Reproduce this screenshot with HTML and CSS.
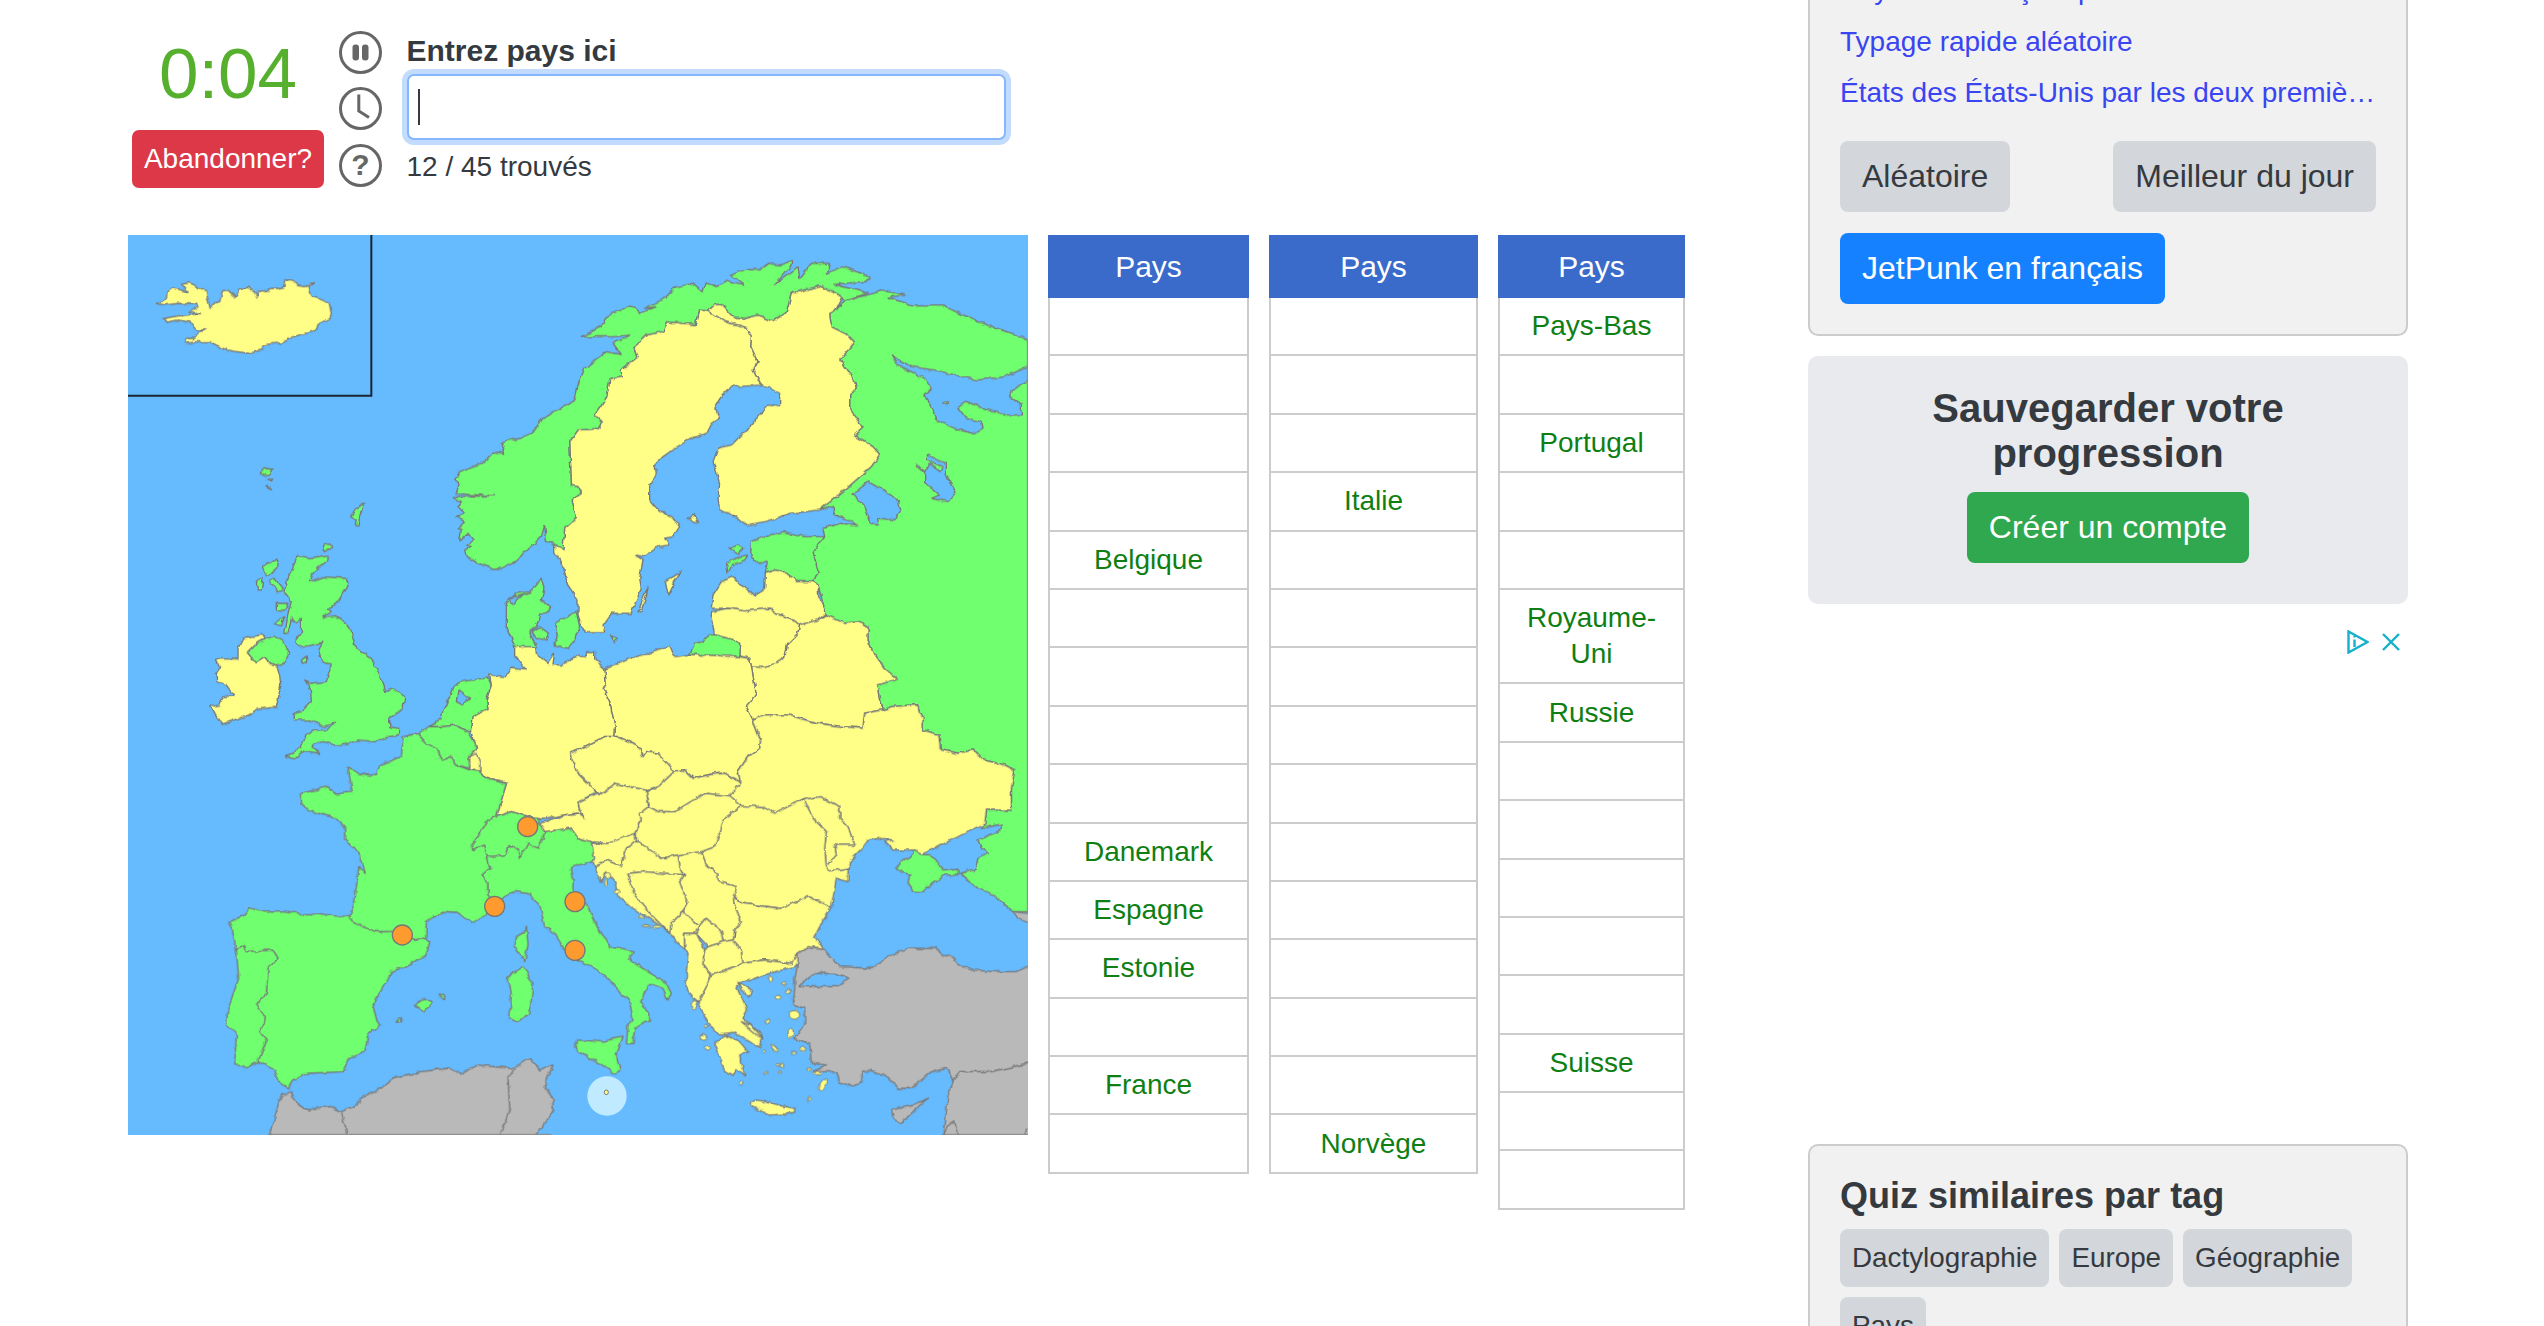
FILE: index.html
```html
<!DOCTYPE html>
<html lang="fr">
<head>
<meta charset="utf-8">
<title>Pays d'Europe</title>
<link rel="stylesheet" href="styles.css">
</head>
<body>
<div class="page">
  <main class="quiz">
    <section class="top">
      <div class="clock-col">
        <div class="timer">0:04</div>
        <button class="btn-red">Abandonner?</button>
      </div>
      <div class="ctl-col">
        <div class="ctl"><svg viewBox="0 0 43 43" class="ctl-svg"><rect x="13.5" y="13.5" width="6.5" height="16" rx="3" class="ctl-fill"/><rect x="23" y="13.5" width="6.5" height="16" rx="3" class="ctl-fill"/></svg></div>
        <div class="ctl"><svg viewBox="0 0 43 43" class="ctl-svg"><path d="M19.8 7.5V24L30 30.5" class="ctl-line"/></svg></div>
        <div class="ctl ctl-q">?</div>
      </div>
      <div class="entry-col">
        <label class="entry-label" for="answer">Entrez pays ici</label>
        <div class="field"><input id="answer" class="field-input" type="text"><span class="caret"></span></div>
        <div class="found">12 / 45 trouvés</div>
      </div>
    </section>
    <section class="board">
      <div class="map">
        <svg class="map-svg" viewBox="0 0 2700 2700">
          <defs>
            <filter id="rough" filterUnits="userSpaceOnUse" x="0" y="0" width="2700" height="2700" color-interpolation-filters="sRGB">
              <feTurbulence type="fractalNoise" baseFrequency="0.045" numOctaves="2" seed="4" result="noise"/>
              <feDisplacementMap in="SourceGraphic" in2="noise" scale="14" xChannelSelector="R" yChannelSelector="G"/>
            </filter>
          </defs>
          <rect width="2700" height="2700" class="ocean"/>
          <path d="M730 0V482H0" class="inset"/>
          <g class="land" filter="url(#rough)">
            <g class="un"><path d="M88,205 118,190 120,170 135,158 160,165 180,172 160,145 185,140 205,155 235,172 240,195 247,222 258,205 275,200 283,168 300,165 322,187 335,162 360,157 380,172 388,190 392,165 415,170 432,160 450,160 468,155 470,135 495,135 510,152 530,155 545,145 558,143 540,155 548,185 570,190 603,205 610,235 605,252 570,265 565,283 540,293 495,305 460,323 405,330 402,345 360,355 295,345 245,320 210,320 172,325 170,310 200,310 215,290 232,285 205,285 185,262 150,255 118,262 108,250 150,243 180,240 218,235 185,230 210,215 205,208 150,205 110,210Z"/></g>

            <!-- Russia and waters -->
            <g transform="translate(1350,0)">
              <path class="ok" d="M800,195 870,180 920,165 980,180 930,187 1000,210 1090,210 1200,260 1300,295 1350,315 1390,330 1390,2040 1350,2030 1305,2030 1260,1990 1240,1975 1200,1960 1175,1940 1145,1915 1190,1905 1200,1870 1235,1855 1210,1840 1200,1815 1270,1785 1270,1768 1210,1780 1220,1770 1225,1725 1300,1725 1300,1660 1310,1605 1280,1590 1215,1575 1185,1545 1140,1555 1090,1545 1085,1500 1035,1485 1035,1450 1015,1410 940,1415 915,1425 905,1380 900,1350 958,1332 920,1300 885,1250 870,1215 870,1175 845,1160 800,1165 745,1140 720,1050 705,1040 720,1010 705,950 740,905 735,880 790,865 840,870 800,850 770,840 765,815 725,825 800,765 880,695 905,658 885,635 830,600 855,575 835,550 815,520 815,475 835,462 830,440 785,375 830,322 810,300 760,275 755,235 775,225Z"/>
              <path class="water" d="M940,360 965,375 1000,395 1070,405 1130,420 1200,435 1280,425 1350,395 1390,380 1390,420 1350,440 1300,465 1295,485 1330,510 1330,540 1280,540 1230,525 1165,500 1140,518 1165,550 1210,560 1215,580 1185,595 1130,580 1075,555 1060,510 1040,480 1060,460 1040,430 990,405 960,390Z"/>
              <path class="ok" d="M1092,503 1108,500 1108,510Z"/>
              <path class="water" d="M825,778 870,740 915,765 960,795 968,825 950,855 905,850 900,870 880,868 860,815Z"/>
              <path class="water" d="M1045,660 1105,685 1105,720 1135,770 1110,800 1060,790 1085,780 1040,740 1040,715 1015,688 1040,710 1055,685 1085,710 1095,695 1045,675Z"/>
              <path class="un" d="M390,228 410,208 430,208 465,245 500,250 540,240 585,258 625,230 640,175 725,152 795,185 775,225 755,235 760,275 810,300 830,322 785,375 830,440 835,462 815,475 815,520 835,550 855,575 830,600 885,635 905,658 880,695 800,765 725,825 640,835 560,860 505,870 475,845 425,825 420,790 425,745 405,680 420,640 460,630 510,580 570,510 605,515 605,475 570,455 548,450 525,405 540,380 518,335 520,300 500,275 445,262Z"/>
              <path class="un" d="M330,850 350,840 362,862 345,858Z"/>
              <path class="un" d="M180,1130 210,1055 205,1085 188,1130Z"/>
              <path class="un" d="M262,1040 310,1010 290,1040 270,1080Z"/>
              <path class="ok" d="M97,1200 118,1210 110,1220Z"/>
              <path class="ok" d="M520,920 570,900 620,890 680,905 740,905 705,950 720,1010 705,1040 660,1040 625,1015 595,1005 562,1015 568,980 530,980 518,950Z"/>
              <path class="ok" d="M445,985 485,965 510,960 500,975 460,990 450,1012Z"/>
              <path class="ok" d="M455,940 480,930 495,940 480,958Z"/>
              <path class="un" d="M400,1120 405,1080 430,1040 465,1025 500,1060 530,1080 560,1060 562,1015 595,1005 625,1015 660,1040 705,1040 720,1050 722,1085 745,1135 720,1155 665,1170 640,1150 590,1135 578,1120 500,1128 450,1120Z"/>
              <path class="un" d="M400,1130 450,1120 500,1128 578,1120 590,1135 640,1150 665,1170 660,1195 630,1225 620,1265 590,1285 560,1298 520,1295 515,1270 482,1262 485,1225 470,1215 410,1200 400,1150Z"/>
              <path class="ok" d="M335,1258 350,1225 375,1220 398,1200 410,1200 470,1215 485,1225 482,1265Z"/>
              <path class="un" d="M665,1170 720,1155 745,1140 800,1165 845,1160 870,1175 870,1215 885,1250 920,1300 958,1332 900,1350 905,1380 915,1425 860,1435 855,1480 795,1475 720,1465 630,1440 555,1440 525,1455 505,1415 535,1380 530,1350 520,1295 560,1298 590,1285 620,1265 630,1225 660,1195Z"/>
              <path class="un" d="M80,1300 175,1265 275,1232 290,1265 335,1258 482,1265 515,1270 520,1295 530,1350 535,1380 505,1415 525,1455 548,1515 545,1540 510,1565 480,1610 488,1640 440,1615 400,1618 345,1630 320,1605 290,1610 240,1555 205,1550 195,1565 175,1530 120,1505 110,1505 112,1480 95,1400 75,1360 85,1350Z"/>
            </g>

            <!-- Scandinavia, Germany -->
            <path class="un" d="M1740,228 1795,262 1850,275 1870,300 1868,335 1890,380 1875,405 1898,450 1830,455 1815,450 1780,485 1760,520 1775,548 1750,565 1735,595 1690,610 1640,640 1605,665 1580,690 1585,715 1565,750 1565,795 1590,825 1635,850 1655,875 1635,905 1610,910 1622,930 1590,935 1550,965 1522,960 1545,975 1535,1030 1540,1060 1510,1135 1450,1135 1425,1170 1430,1190 1370,1190 1360,1170 1350,1140 1350,1095 1318,1048 1308,1000 1280,950 1280,930 1305,940 1310,880 1345,850 1332,795 1360,775 1350,755 1330,750 1325,620 1350,585 1415,580 1422,560 1400,540 1435,490 1445,435 1480,425 1480,405 1530,365 1520,335 1555,300 1605,290 1615,260 1705,268 1715,225Z"/>
            <path class="ok" d="M1060,990 1015,965 1010,945 1030,935 1015,930 1035,915 1020,895 995,920 1000,885 990,880 1010,860 985,845 1010,835 990,815 1000,800 975,785 1100,782 985,777 995,745 980,735 995,710 1030,695 1075,680 1095,650 1130,655 1120,620 1175,610 1210,595 1245,550 1285,525 1340,495 1350,450 1370,400 1400,375 1435,350 1480,358 1455,325 1505,300 1455,305 1360,305 1420,275 1435,245 1510,210 1535,235 1585,215 1550,220 1610,190 1645,155 1695,145 1725,170 1735,140 1765,155 1790,135 1850,150 1810,120 1860,100 1895,105 1920,85 1955,90 1990,78 1990,90 1940,150 2010,95 2015,130 2050,85 2105,85 2095,115 2145,95 2200,115 2230,130 2200,140 2120,148 2220,175 2150,195 2145,185 2075,152 1990,175 1975,230 1935,258 1890,240 1850,250 1815,245 1780,208 1760,208 1740,228 1715,225 1705,268 1615,260 1605,290 1555,300 1520,335 1530,365 1480,405 1480,425 1445,435 1435,490 1400,540 1422,560 1415,580 1350,585 1325,620 1330,750 1350,755 1360,775 1332,795 1345,850 1310,880 1305,940 1280,930 1255,915 1250,870 1240,905 1210,935 1160,980 1120,1000 1090,1000Z"/>
            <path class="un" d="M1160,1235 1220,1235 1230,1260 1260,1285 1280,1255 1275,1290 1300,1290 1350,1260 1372,1270 1375,1250 1400,1250 1400,1275 1430,1300 1435,1350 1425,1360 1445,1400 1462,1480 1460,1505 1430,1505 1350,1545 1325,1555 1340,1595 1350,1615 1405,1670 1350,1702 1355,1725 1370,1750 1350,1735 1310,1740 1250,1750 1200,1745 1150,1730 1105,1745 1135,1645 1070,1630 1055,1610 1025,1605 1022,1565 1048,1540 1035,1515 1030,1490 1035,1445 1080,1420 1075,1390 1090,1350 1085,1320 1135,1325 1150,1300 1195,1305 1160,1262Z"/>

            <!-- British Isles and northern islands -->
            <path class="ok" d="M395,712 410,700 435,703 425,722 412,720Z"/>
            <path class="ok" d="M417,752 428,765 420,760Z"/>
            <path class="ok" d="M418,733 432,733 428,740Z"/>
            <path class="ok" d="M668,845 680,825 695,815 708,805 698,835 690,870 682,870 685,855Z"/>
            <path class="ok" d="M585,945 592,925 605,930 617,940 600,943 590,950Z"/>
            <path class="ok" d="M508,962 550,968 600,960 600,975 570,1000 550,1020 545,1040 585,1025 655,1030 660,1045 645,1070 635,1095 610,1118 598,1120 610,1130 585,1148 620,1145 650,1160 670,1190 680,1230 700,1250 730,1270 750,1310 765,1350 770,1370 800,1362 830,1385 825,1420 785,1450 785,1475 812,1480 812,1498 770,1510 740,1520 690,1515 660,1528 620,1530 585,1520 550,1530 575,1555 530,1547 500,1572 475,1565 520,1535 535,1500 555,1485 600,1485 620,1462 590,1475 545,1455 497,1455 495,1435 520,1430 550,1400 548,1370 540,1350 530,1335 545,1345 595,1340 610,1290 580,1275 572,1245 585,1222 545,1232 510,1235 500,1220 520,1190 520,1150 505,1165 490,1150 480,1195 470,1195 482,1125 490,1100 470,1075 475,1035 490,1010Z"/>
            <path class="ok" d="M405,995 450,972 445,1000 418,1022Z"/>
            <path class="ok" d="M385,1035 405,1030 400,1065 388,1065Z"/>
            <path class="ok" d="M425,1040 440,1030 470,1065 450,1070Z"/>
            <path class="ok" d="M445,1105 480,1105 470,1125 445,1125Z"/>
            <path class="ok" d="M437,1165 470,1145 460,1172Z"/>
            <path class="ok" d="M520,1275 538,1263 535,1280 525,1285Z"/>
            <path class="un" d="M265,1272 330,1272 330,1240 345,1210 385,1205 400,1195 410,1210 390,1222 358,1255 375,1275 410,1265 425,1285 447,1292 455,1320 458,1350 450,1395 445,1417 390,1422 350,1445 300,1462 280,1468 262,1440 248,1415 275,1410 285,1385 318,1382 295,1350 270,1340 265,1315 275,1300Z"/>
            <path class="ok" d="M358,1255 390,1222 440,1203 470,1225 485,1255 470,1285 445,1290 425,1285 410,1265 385,1280 370,1270Z"/>

            <!-- Denmark -->
            <path class="ok" d="M1160,1235 1150,1210 1135,1180 1135,1105 1165,1075 1205,1070 1240,1030 1248,1060 1240,1095 1268,1115 1262,1130 1235,1140 1225,1175 1205,1190 1225,1235Z"/>
            <path class="water" d="M1145,1090 1205,1075 1170,1090 1155,1108Z"/>
            <path class="ok" d="M1212,1190 1235,1175 1262,1195 1258,1215 1225,1210Z"/>
            <path class="ok" d="M1280,1165 1345,1130 1355,1175 1340,1215 1320,1240 1275,1230 1290,1210Z"/>

            <!-- Netherlands -->
            <path class="ok" d="M905,1475 940,1450 945,1425 975,1365 980,1350 1000,1340 1080,1328 1090,1350 1075,1390 1080,1420 1035,1445 1030,1490 1020,1490 985,1470 945,1475Z"/>
            <path class="water" d="M990,1365 1025,1390 1005,1410 985,1400Z"/>

            <!-- South-west -->
            <g transform="translate(0,1350)">
              <path class="un" d="M1025,215 1045,205 1055,235 1055,258 1025,255Z"/>
              <path class="ok" d="M868,145 905,125 945,125 985,120 1020,140 1035,165 1048,190 1022,215 1025,250 985,240 970,215 945,225 925,190 895,175Z"/>
              <path class="ok" d="M868,145 895,175 925,190 945,225 970,215 985,240 1025,255 1055,260 1070,280 1135,295 1105,395 1080,405 1035,480 1030,495 1070,480 1078,515 1085,550 1062,570 1080,590 1080,630 1105,660 1060,700 1030,712 990,685 940,682 895,710 893,760 860,765 800,740 745,740 680,715 665,695 680,650 692,545 712,565 695,505 650,465 650,430 625,400 545,378 520,355 520,325 600,305 620,325 672,318 660,245 690,265 745,272 755,240 820,215 825,155Z"/>
              <path class="ok" d="M1195,720 1200,780 1190,830 1160,785 1165,755 1190,740Z"/>
              <path class="ok" d="M1185,845 1215,895 1205,990 1165,1010 1145,1000 1150,925 1138,875Z"/>
              <path class="ok" d="M305,710 350,690 365,668 395,678 470,678 540,690 580,683 615,692 665,695 680,715 745,740 800,740 860,765 893,760 905,770 895,810 830,845 790,860 780,880 735,960 745,1005 755,1020 720,1050 710,1100 665,1120 645,1160 535,1165 495,1185 480,1212 450,1185 440,1155 390,1130 415,1065 395,1040 412,1000 385,955 415,925 420,850 450,820 435,795 355,800 350,782 325,795 310,720Z"/>
              <path class="ok" d="M325,795 350,782 355,800 435,795 450,820 420,850 415,925 385,955 412,1000 395,1040 415,1065 390,1130 360,1145 320,1140 325,1045 295,1020 300,970 332,880Z"/>
              <path class="ok" d="M860,960 890,940 912,950 890,980Z"/>
              <path class="ok" d="M930,930 950,932 950,945Z"/>
              <path class="ok" d="M805,1010 820,995 820,1010Z"/>
              <path class="ok" d="M1030,495 1035,480 1080,405 1105,395 1150,380 1200,395 1235,400 1235,415 1250,440 1245,460 1230,490 1200,475 1175,520 1170,495 1145,480 1130,510 1078,515 1070,480Z"/>
              <path class="gr" d="M415,1380 460,1230 488,1220 510,1260 540,1275 600,1262 640,1280 685,1260 700,1235 745,1220 790,1180 880,1160 960,1150 1000,1165 1050,1140 1150,1150 1210,1120 1235,1155 1275,1140 1248,1205 1275,1240 1275,1280 1225,1350 1200,1380Z"/>
              <path class="ln" d="M640,1280 665,1380M1160,1150 1140,1180 1145,1270 1110,1380"/>
            </g>

            <!-- South-east -->
            <g transform="translate(1350,1350)">
              <path class="ok" d="M950,550 1005,505 1005,495 1030,508 1060,510 1095,555 1140,550 1140,570 1100,570 1030,620 1005,618 990,590 995,570Z"/>
              <path class="un" d="M525,105 555,90 630,90 720,115 795,125 855,130 860,85 915,75 940,65 1015,60 1035,100 1035,135 1085,150 1090,195 1140,205 1185,195 1215,225 1280,240 1310,255 1300,310 1300,375 1225,375 1220,420 1160,445 1060,495 1030,508 1005,495 945,495 920,470 945,465 910,460 870,465 855,490 815,530 810,550 750,560 745,545 775,510 770,480 830,480 820,450 810,425 785,400 785,365 725,335 670,345 590,385 555,365 490,362 460,340 455,332 488,290 480,260 510,215 545,190 548,165Z"/>
              <path class="gr" d="M1305,680 1390,690 1390,730 1320,700Z"/>
              <path class="un" d="M0,352 55,325 75,325 110,295 205,315 212,365 185,385 190,405 170,445 90,475 40,470 0,460 -20,430 -100,440 -115,415 -40,390 0,385 20,400 5,375Z"/>
              <path class="un" d="M0,195 -25,205 -10,245 0,265 55,320 75,325 110,295 205,315 245,302 290,258 240,205 205,200 195,215 175,180 120,155 105,155 80,155Z"/>
              <path class="ok" d="M-272,515 -220,510 -205,480 -180,495 -175,520 -150,475 -120,490 -105,460 -100,440 -20,430 0,460 40,470 50,520 45,530 0,540 -20,548 -15,580 -15,620 22,650 50,710 95,785 165,800 155,825 210,860 265,895 280,925 270,945 255,910 215,895 185,950 215,985 215,1005 170,1030 165,1075 145,1075 150,1020 165,1005 155,950 130,925 90,880 60,855 0,825 -40,795 -70,745 -100,725 -115,660 -150,625 -190,620 -220,635 -245,660 -270,630 -270,590 -288,570 -265,550Z"/>
              <path class="ok" d="M-10,1085 0,1065 70,1070 135,1055 115,1110 125,1150 115,1168 65,1135 0,1100Z"/>
              <path class="un" d="M670,345 725,335 785,365 785,400 810,425 820,450 830,480 770,480 775,510 745,545 740,490 745,440 705,400 690,365Z"/>
              <path class="un" d="M490,362 555,365 590,385 670,345 690,365 705,400 745,440 740,490 745,545 755,558 810,550 810,590 775,580 765,640 760,665 690,635 610,670 490,655 470,630 475,605 420,590 420,565 385,540 370,500 410,485 440,400Z"/>
              <path class="un" d="M490,655 610,670 690,635 760,665 725,725 710,755 735,790 690,785 660,805 640,835 560,825 495,835 490,800 465,765 470,735 490,710 465,650 470,635Z"/>
              <path class="un" d="M205,320 245,302 290,258 320,255 345,280 400,268 440,265 488,290 455,332 380,325 330,355 290,380 240,380 215,365Z"/>
              <path class="un" d="M215,365 240,380 290,380 330,355 380,325 455,332 490,362 440,400 410,485 370,500 300,510 250,520 175,465 175,440 190,405 185,385 212,365Z"/>
              <path class="un" d="M40,475 90,475 170,445 175,465 145,490 130,545 85,525 50,545 45,530 50,520Z"/>
              <path class="un" d="M175,465 250,520 300,510 310,560 320,570 200,560 150,565 170,630 225,695 275,745 215,700 165,670 120,630 110,590 85,560 70,590 50,545 85,525 130,545 145,490Z"/>
              <path class="un" d="M150,565 200,560 320,570 305,590 320,630 330,655 305,690 280,715 275,745 225,695 170,630Z"/>
              <path class="un" d="M300,510 370,500 385,540 420,565 420,590 475,605 470,630 465,650 490,710 470,735 465,765 435,770 430,740 385,700 365,725 315,680 330,655 320,630 305,590 320,570 310,560Z"/>
              <path class="un" d="M365,725 385,700 430,740 435,770 390,785 355,745Z"/>
              <path class="un" d="M280,715 305,690 315,680 365,725 355,745 320,745 320,795 275,745Z"/>
              <path class="un" d="M320,795 320,745 355,745 380,795 375,835 400,870 385,905 360,955 325,915 325,860 330,805Z"/>
              <path class="un" d="M390,785 435,770 465,765 490,800 495,835 440,855 400,870 375,835 380,795Z"/>
              <path class="un" d="M400,870 440,855 495,835 560,825 640,835 660,805 668,825 650,845 590,860 530,880 485,890 475,905 505,970 495,1000 530,1030 550,1045 545,1090 500,1060 470,1045 425,1050 405,1030 385,1005 360,955 385,905Z"/>
              <path class="un" d="M410,1075 440,1050 480,1065 510,1100 485,1110 500,1170 475,1150 465,1175 440,1160 425,1115Z"/>
              <path class="un" d="M490,1010 520,1020 555,1060 530,1045Z"/>
              <path class="un" d="M520,1250 540,1245 600,1260 650,1270 650,1285 580,1290 520,1265Z"/>
              <path class="un" d="M480,890 520,915 515,935 490,915Z"/>
              <path class="gr" d="M650,885 660,830 660,805 690,785 735,790 785,845 880,850 930,815 990,790 1060,790 1075,785 1090,810 1120,815 1140,840 1190,855 1240,860 1310,860 1350,845 1390,835 1390,1125 1350,1135 1240,1160 1145,1160 1125,1190 1110,1150 1060,1160 1000,1210 960,1210 920,1170 855,1155 850,1190 820,1205 785,1190 775,1160 705,1160 745,1140 700,1135 695,1075 650,1060 680,1020 680,970 645,960 650,910Z"/>
              <path class="water" d="M660,905 710,865 770,865 815,880 780,905 690,905Z"/>
              <path class="gr" d="M1145,1160 1240,1160 1350,1135 1390,1125 1390,1380 1095,1380 1110,1230 1125,1190Z"/>
              <path class="ln" d="M1100,1350 1110,1320 1130,1310 1145,1380M1320,1380 1350,1330"/>
              <path class="gr" d="M940,1275 1010,1260 1050,1238 1000,1285 970,1315 945,1300Z"/>
              <g class="un isles">
                <ellipse cx="575" cy="882" rx="6" ry="9"/><ellipse cx="617" cy="898" rx="7" ry="4"/><ellipse cx="630" cy="920" rx="8" ry="5"/><ellipse cx="600" cy="937" rx="9" ry="6"/><ellipse cx="648" cy="990" rx="17" ry="13"/><ellipse cx="638" cy="1045" rx="8" ry="15"/><ellipse cx="568" cy="1010" rx="5" ry="7"/><ellipse cx="675" cy="1092" rx="11" ry="5"/><ellipse cx="645" cy="1102" rx="8" ry="4"/><ellipse cx="590" cy="1090" rx="12" ry="5" transform="rotate(45 590 1090)"/><ellipse cx="558" cy="1100" rx="4" ry="5"/><ellipse cx="600" cy="1140" rx="5" ry="4"/><ellipse cx="612" cy="1138" rx="5" ry="7"/><ellipse cx="562" cy="1165" rx="5" ry="3"/><ellipse cx="605" cy="1162" rx="4" ry="4"/><ellipse cx="695" cy="1153" rx="6" ry="4"/><ellipse cx="718" cy="1163" rx="12" ry="4"/><ellipse cx="490" cy="1195" rx="4" ry="7"/><ellipse cx="377" cy="1057" rx="10" ry="9"/><ellipse cx="388" cy="1088" rx="6" ry="7"/><ellipse cx="347" cy="960" rx="7" ry="14"/><ellipse cx="383" cy="1022" rx="4" ry="7"/><ellipse cx="733" cy="1202" rx="9" ry="20" transform="rotate(25 733 1202)"/><ellipse cx="693" cy="1241" rx="3" ry="8"/><ellipse cx="90" cy="572" rx="8" ry="9"/><ellipse cx="84" cy="592" rx="4" ry="10"/><ellipse cx="117" cy="620" rx="10" ry="6"/><ellipse cx="190" cy="697" rx="10" ry="4"/><ellipse cx="205" cy="722" rx="14" ry="3"/><ellipse cx="235" cy="725" rx="12" ry="4"/>
              </g>
            </g>
          </g>
          <path class="frame" d="M2698 315V2030M420 2698H1270M2440 2698H2700"/>
          <g class="dots">
            <circle cx="1199" cy="1775" r="30"/>
            <circle cx="1100" cy="2014" r="30"/>
            <circle cx="823" cy="2100" r="30"/>
            <circle cx="1341" cy="2000" r="30"/>
            <circle cx="1341" cy="2146" r="30"/>
          </g>
          <circle cx="1437" cy="2583" r="59" class="halo"/>
          <ellipse cx="1435" cy="2572" rx="6" ry="7" class="malta"/>
        </svg>
      </div>

      <table class="answers col-a">
        <thead><tr><th>Pays</th></tr></thead>
        <tbody>
          <tr><td></td></tr><tr><td></td></tr><tr><td></td></tr><tr><td></td></tr>
          <tr><td>Belgique</td></tr>
          <tr><td></td></tr><tr><td></td></tr><tr><td></td></tr><tr><td></td></tr>
          <tr><td>Danemark</td></tr><tr><td>Espagne</td></tr><tr><td>Estonie</td></tr>
          <tr><td></td></tr>
          <tr><td>France</td></tr>
          <tr><td></td></tr>
        </tbody>
      </table>
      <table class="answers col-b">
        <thead><tr><th>Pays</th></tr></thead>
        <tbody>
          <tr><td></td></tr><tr><td></td></tr><tr><td></td></tr>
          <tr><td>Italie</td></tr>
          <tr><td></td></tr><tr><td></td></tr><tr><td></td></tr><tr><td></td></tr><tr><td></td></tr><tr><td></td></tr><tr><td></td></tr><tr><td></td></tr><tr><td></td></tr><tr><td></td></tr>
          <tr><td>Norvège</td></tr>
        </tbody>
      </table>
      <table class="answers col-c">
        <thead><tr><th>Pays</th></tr></thead>
        <tbody>
          <tr><td>Pays-Bas</td></tr>
          <tr><td></td></tr>
          <tr><td>Portugal</td></tr>
          <tr><td></td></tr><tr><td></td></tr>
          <tr><td>Royaume-Uni</td></tr>
          <tr><td>Russie</td></tr>
          <tr><td></td></tr><tr><td></td></tr><tr><td></td></tr><tr><td></td></tr><tr><td></td></tr>
          <tr><td>Suisse</td></tr>
          <tr><td></td></tr><tr><td></td></tr>
        </tbody>
      </table>
    </section>
  </main>

  <aside class="side">
    <div class="card card-links">
      <a class="link" href="#">Pays commençant par A</a>
      <a class="link" href="#">Typage rapide aléatoire</a>
      <a class="link" href="#">États des États-Unis par les deux premières lettres</a>
      <div class="btn-row">
        <a class="btn btn-gray" href="#">Aléatoire</a>
        <a class="btn btn-gray" href="#">Meilleur du jour</a>
      </div>
      <div class="btn-row">
        <a class="btn btn-blue" href="#">JetPunk en français</a>
      </div>
    </div>
    <div class="save">
      <h2 class="save-title">Sauvegarder votre progression</h2>
      <a class="btn btn-green" href="#">Créer un compte</a>
    </div>
    <div class="ad">
      <svg class="ad-choice" viewBox="0 0 22 24"><path d="M1.5 1.5V22.5L20.5 12Z" class="ad-line"/><path d="M7.5 9.5V17M7.5 6V7.5" class="ad-line"/></svg>
      <svg class="ad-close" viewBox="0 0 18 18"><path d="M1 1 17 17M17 1 1 17" class="ad-line"/></svg>
    </div>
    <div class="card card-tags">
      <h3 class="tags-title">Quiz similaires par tag</h3>
      <div class="tags">
        <a class="tag" href="#">Dactylographie</a>
        <a class="tag" href="#">Europe</a>
        <a class="tag" href="#">Géographie</a>
        <a class="tag" href="#">Pays</a>
      </div>
    </div>
  </aside>
</div>
</body>
</html>
```

FILE: styles.css
```css
* { box-sizing: border-box; }
html, body { margin: 0; height: 1326px; overflow: hidden; background: #fff; }
body { font-family: "Liberation Sans", Arial, sans-serif; font-size: 28px; line-height: 36px; color: #343a40; }
a { text-decoration: none; }

.page { display: flex; align-items: flex-start; }
.quiz { width: 1808px; padding-left: 128px; flex: none; }

/* top bar */
.top { display: flex; padding: 30px 0 0 4px; height: 235px; }
.clock-col { width: 192px; padding-top: 2px; display: flex; flex-direction: column; align-items: center; }
.timer { font-size: 71px; line-height: 84px; color: #56b02e; margin-bottom: 14px; }
.btn-red { width: 192px; height: 58px; border: 0; border-radius: 7px; padding: 0; background: #dc3848; color: #fff; font: inherit; }
.ctl-col { width: 43px; margin-left: 15px; display: flex; flex-direction: column; gap: 13.5px; padding-top: 0.5px; }
.ctl { width: 43px; height: 43px; border: 3px solid #666; border-radius: 50%; flex: none; display: flex; align-items: center; justify-content: center; color: #666; position: relative; }
.ctl-svg { position: absolute; left: -3px; top: -3px; width: 43px; height: 43px; }
.ctl-fill { fill: #666; }
.ctl-line { fill: none; stroke: #666; stroke-width: 3; }
.ctl-q { font-weight: bold; font-size: 30px; }
.entry-col { width: 599.5px; margin-left: 24.5px; padding-top: 3px; display: flex; flex-direction: column; }
.entry-label { font-weight: bold; font-size: 30px; line-height: 36px; margin-bottom: 5px; }
.field { position: relative; height: 66px; }
.field-input { display: block; width: 100%; height: 66px; border: 2px solid #86b7fe; border-radius: 7px; box-shadow: 0 0 0 5px #c3dcfe; background: #fff; outline: 0; }
.caret { position: absolute; left: 11px; top: 15px; width: 2px; height: 36px; background: #343a40; }
.found { margin-top: 8.5px; }

/* board */
.board { display: flex; align-items: flex-start; gap: 20px; }
.map { width: 900px; height: 900px; flex: none; }
.map-svg { display: block; width: 900px; height: 900px; }
.ocean { fill: #66bbff; }
.inset { fill: none; stroke: #1c2430; stroke-width: 6; }
.land path, .land ellipse { stroke: #777; stroke-width: 4; stroke-linejoin: round; }
.land .isles ellipse { stroke-width: 3; }
.un, .un ellipse { fill: #ffff88; }
.ok { fill: #6fff6f; }
.gr { fill: #b9b9b9; }
.water { fill: #66bbff; }
.land .ln { fill: none; }
.frame { fill: none; stroke: #888; stroke-width: 3; }
.dots circle { fill: #ff9a2e; stroke: #777; stroke-width: 4; }
.halo { fill: #bfeaff; }
.malta { fill: #ffff88; stroke: #777; stroke-width: 3; }

.answers { border-collapse: collapse; table-layout: fixed; flex: none; }
.col-a { width: 201px; }
.col-b { width: 209px; }
.col-c { width: 187px; }
.answers th { background: #3a6bcb; color: #fff; font-weight: normal; font-size: 30px; line-height: 36px; padding: 11.5px 4px; border: 2px solid #3a6bcb; }
.answers td { border: 2px solid #ccc; padding: 10.2px 12px; text-align: center; color: #0f7f14; height: 58.4px; }

/* sidebar */
.side { width: 600px; flex: none; margin-top: -59.6px; }
.card { border: 2px solid #ccc; border-radius: 10px; background: #f1f1f1; padding: 30px; }
.link { display: block; color: #3a45f2; white-space: nowrap; overflow: hidden; text-overflow: ellipsis; margin-bottom: 15.5px; }
.card-links { padding-bottom: 29.5px; }
.link + .btn-row { margin-top: 29.5px; }
.btn-row { display: flex; justify-content: space-between; margin-top: 20.5px; }
.btn { display: inline-block; font-size: 32px; line-height: 47.5px; padding: 12px 22px; border-radius: 8px; }
.btn-gray { background: #d3d6da; color: #343a40; }
.btn-blue { background: #1681ff; color: #fff; }
.btn-green { background: #2fa84f; color: #fff; }
.save { margin-top: 20px; background: #e9eaed; border-radius: 10px; padding: 30px 30px 40px; text-align: center; height: 248px; }
.save-title { margin: 0 0 16px; font-size: 40px; line-height: 45px; font-weight: bold; }
.ad { height: 540.5px; display: flex; justify-content: flex-end; align-items: flex-start; gap: 13px; padding: 26px 8px 0 0; }
.ad-choice { width: 22px; height: 24px; }
.ad-close { width: 18px; height: 18px; margin-top: 3px; }
.ad-line { fill: none; stroke: #14b0cc; stroke-width: 2.4; }
.card-tags { padding: 28px 30px 30px; }
.tags-title { margin: 0 0 11px; font-size: 36px; line-height: 44px; font-weight: bold; }
.tags { display: flex; flex-wrap: wrap; gap: 10px; }
.tag { height: 58px; padding: 11px 12px; border-radius: 8px; background: #d3d6da; color: #343a40; font-size: 27.8px; }
```
